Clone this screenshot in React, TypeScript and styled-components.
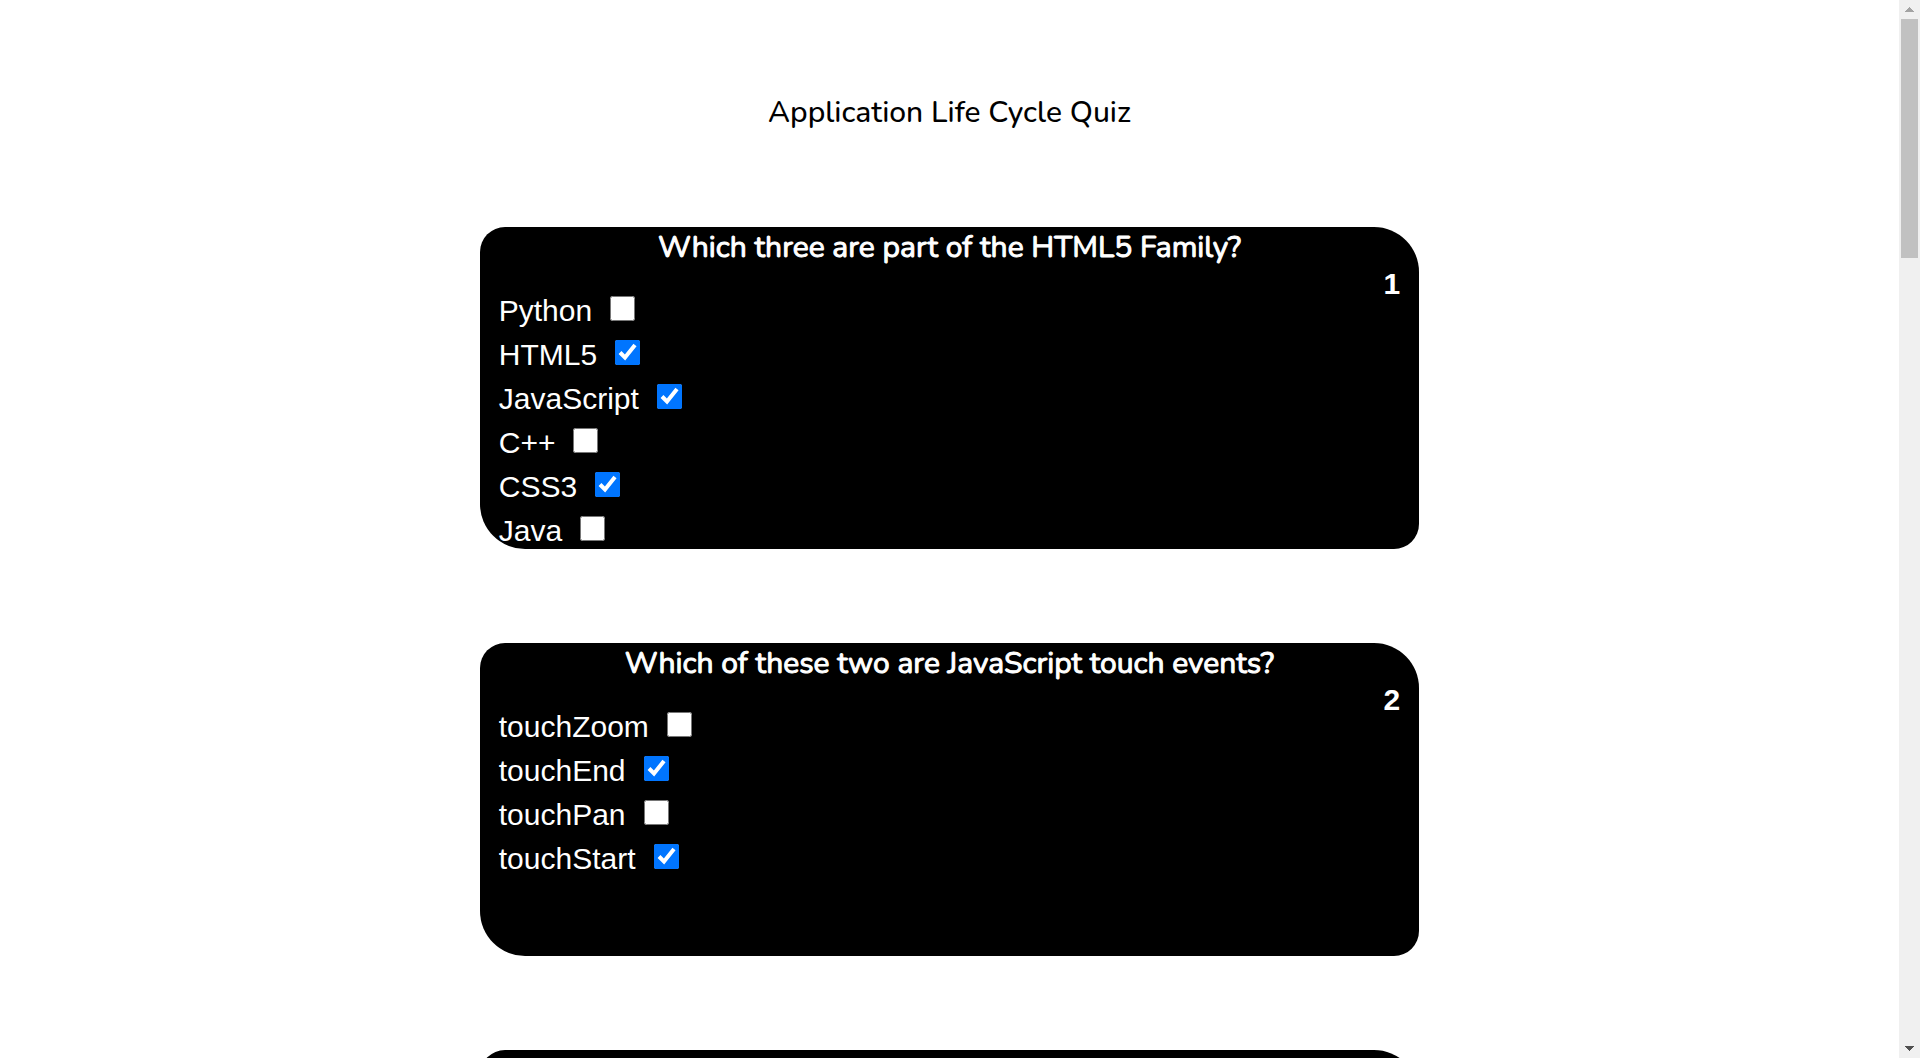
import React from 'react';
import styled, { createGlobalStyle } from 'styled-components';

const GlobalStyle = createGlobalStyle`
  *, *::before, *::after { box-sizing: border-box; }
  body { margin: 0; background: #fff; }
`;

const headingFont = `'Nunito', 'Lato', sans-serif`;

const Page = styled.div`
  display: grid;
  grid-template-columns: minmax(0, 1fr) 21px;
  height: 100vh;
  overflow: hidden;
  font-family: 'Liberation Sans', Arial, sans-serif;
  font-size: 30px;
`;

const Content = styled.main`
  display: flex;
  flex-direction: column;
  gap: 94px;
  padding: 92px 25vw 0;
  overflow: hidden;
`;

const Title = styled.h1`
  flex: none;
  margin: 0;
  font: 500 30px/41px ${headingFont};
  color: #000;
  text-align: center;
`;

const Card = styled.fieldset`
  flex: none;
  min-width: 0;
  min-height: 313px;
  margin: 0;
  padding: 0 2%;
  border: 0;
  border-radius: 25px 45px 25px 45px;
  background: #000;
  color: #fff;
`;

const Question = styled.h2`
  margin: 0;
  font: 400 30px/41px ${headingFont};
  -webkit-text-stroke: 1px #fff;
  text-align: center;
`;

const Answers = styled.div`
  display: flex;
  justify-content: space-between;
  align-items: flex-start;
`;

const Options = styled.ul`
  margin: 0;
  padding: 17px 0 0;
  list-style: none;
`;

const Option = styled.li`
  display: flex;
  align-items: baseline;
  gap: 18px;
  height: 44px;
  line-height: 52px;
`;

const Checkbox = styled.input`
  width: 25px;
  height: 25px;
  margin: 0;
`;

const QuestionNumber = styled.strong`
  line-height: 32px;
`;

const Track = styled.div`
  display: flex;
  flex-direction: column;
  align-items: center;
  background: #f0f0f0;
`;

const Thumb = styled.div`
  width: 17px;
  height: 239px;
  margin-bottom: auto;
  background: #c1c1c1;
`;

const Arrow = styled.svg`
  display: block;
  width: 17px;
  height: 19px;
`;

type QuizQuestion = { text: string; options: [label: string, checked: boolean][] };

const questions: QuizQuestion[] = [
  {
    text: 'Which three are part of the HTML5 Family?',
    options: [
      ['Python', false],
      ['HTML5', true],
      ['JavaScript', true],
      ['C++', false],
      ['CSS3', true],
      ['Java', false],
    ],
  },
  {
    text: 'Which of these two are JavaScript touch events?',
    options: [
      ['touchZoom', false],
      ['touchEnd', true],
      ['touchPan', false],
      ['touchStart', true],
    ],
  },
];

function QuestionCard({ question, number }: { question: QuizQuestion; number: number }) {
  const headingId = `question-${number}`;
  return (
    <Card aria-labelledby={headingId}>
      <Question id={headingId}>{question.text}</Question>
      <Answers>
        <Options>
          {question.options.map(([label, checked]) => (
            <Option key={label}>
              <label htmlFor={`${headingId}-${label}`}>{label}</label>
              <Checkbox type="checkbox" id={`${headingId}-${label}`} defaultChecked={checked} />
            </Option>
          ))}
        </Options>
        <QuestionNumber>{number}</QuestionNumber>
      </Answers>
    </Card>
  );
}

export default function App() {
  return (
    <>
      <GlobalStyle />
      <Page>
        <Content>
          <Title>Application Life Cycle Quiz</Title>
          {questions.map((question, index) => (
            <QuestionCard key={question.text} question={question} number={index + 1} />
          ))}
          <Card />
        </Content>
        <Track aria-hidden="true">
          <Arrow viewBox="0 0 17 19" shapeRendering="crispEdges">
            <path d="M4 12h9L8.500 7z" fill="#a3a3a3" />
          </Arrow>
          <Thumb />
          <Arrow viewBox="0 0 17 19" shapeRendering="crispEdges">
            <path d="M4 7h9L8.500 12z" fill="#505050" />
          </Arrow>
        </Track>
      </Page>
    </>
  );
}
